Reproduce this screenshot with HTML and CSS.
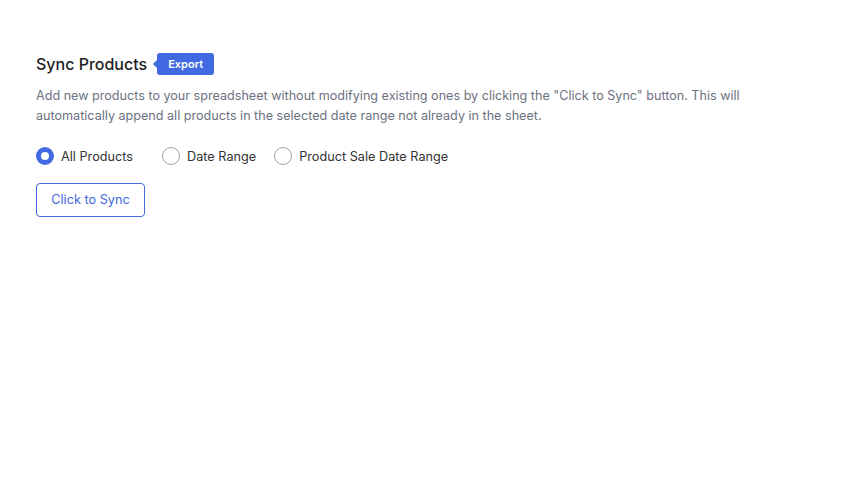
FILE: index.html
```html
<!DOCTYPE html>
<html lang="en">
<head>
<meta charset="utf-8">
<title>Sync Products</title>
<link rel="stylesheet" href="styles.css">
</head>
<body>
<section class="panel">
  <div class="title-row">
    <h2 class="title">Sync Products</h2>
    <span class="badge">Export</span>
  </div>
  <p class="desc">Add new products to your spreadsheet without modifying existing ones by clicking the "Click to Sync" button. This will automatically append all products in the selected date range not already in the sheet.</p>
  <div class="radios">
    <label class="radio radio-first"><span class="dot checked"></span><span class="label">All Products</span></label>
    <label class="radio"><span class="dot"></span><span class="label">Date Range</span></label>
    <label class="radio"><span class="dot"></span><span class="label">Product Sale Date Range</span></label>
  </div>
  <button class="sync-btn" type="button">Click to Sync</button>
</section>
</body>
</html>
```

FILE: styles.css
```css
html, body {
  margin: 0;
  padding: 0;
  background: #ffffff;
}
body {
  font-family: Inter, "Noto Sans", "Liberation Sans", sans-serif;
}
.panel {
  padding: 52px 36px 0 36px;
  width: 730px;
}
.title-row {
  display: flex;
  align-items: center;
  gap: 9px;
  height: 24px;
}
.title {
  margin: 0;
  font-size: 16px;
  font-weight: 500;
  color: #1d1d1f;
  line-height: 24px;
}
.badge {
  position: relative;
  background: #4169e1;
  color: #ffffff;
  font-size: 11px;
  font-weight: 600;
  line-height: 22px;
  height: 22px;
  padding: 0 11px;
  border-radius: 3px;
  margin-left: 1px;
}
.badge::before {
  content: "";
  position: absolute;
  left: -4px;
  top: 7px;
  border-top: 4px solid transparent;
  border-bottom: 4px solid transparent;
  border-right: 4px solid #4169e1;
}
.desc {
  margin: 10px 0 0 0;
  font-size: 12.6px;
  line-height: 20px;
  color: #6b7280;
}
.radios {
  display: flex;
  align-items: center;
  gap: 18px;
  margin-top: 21px;
  height: 18px;
}
.radio {
  display: flex;
  align-items: center;
  gap: 7px;
}
.radio-first {
  margin-right: 11px;
}
.dot {
  box-sizing: border-box;
  width: 18px;
  height: 18px;
  border-radius: 50%;
  border: 1px solid #9ca3af;
  background: #fff;
}
.dot.checked {
  border: 5px solid #4169e1;
}
.label {
  font-size: 12.7px;
  color: #333333;
}
.sync-btn {
  display: block;
  margin-top: 18px;
  box-sizing: border-box;
  height: 34px;
  width: 109px;
  border: 1px solid #4169e1;
  border-radius: 4px;
  background: #fff;
  color: #4169e1;
  font-family: inherit;
  font-size: 12.7px;
  line-height: 30px;
  padding: 0 0 1px 0;
}
```
